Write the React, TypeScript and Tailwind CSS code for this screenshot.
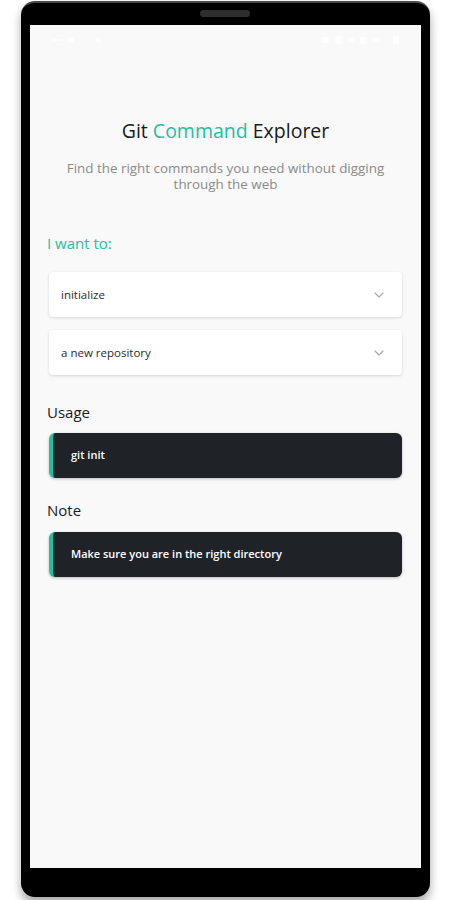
import { ChevronDown } from 'lucide-react'

const font = { fontFamily: '"Open Sans", "Noto Sans", sans-serif' }

function Select({ value }: { value: string }) {
  return (
    <div className="mx-[2px] h-[45px] flex items-center justify-between pl-3 pr-[15px] bg-white rounded-[4px] shadow-[0_1px_3px_rgba(0,0,0,0.14)]">
      <span className="text-[11.5px] text-[#2b2b2b]">{value}</span>
      <ChevronDown className="w-[16px] h-[16px] text-[#a8a8a8]" strokeWidth={1.75} />
    </div>
  )
}

function CodeBox({ text }: { text: string }) {
  return (
    <div className="mx-[2px] h-[45px] flex items-center bg-[#1f2328] rounded-[6px] border-l-[4px] border-[#1fbf9f] pl-[18px] shadow-[0_1px_3px_rgba(0,0,0,0.25)]">
      <span className="text-[11px] font-semibold text-white">{text}</span>
    </div>
  )
}

export default function App() {
  return (
    <div className="w-[450px] h-[900px] bg-white relative" style={font}>
      {/* Phone frame */}
      <div className="absolute left-[21px] top-[1px] w-[409px] h-[896px] bg-black rounded-[14px] border-t-2 border-[#4a4a4a] shadow-[0_6px_10px_rgba(0,0,0,0.35)] pt-[22px] px-[9px] pb-[29px] flex flex-col">
        <div className="absolute left-[179px] top-[7px] w-[50px] h-[7px] rounded-full bg-[#2e2e2e]" />

        {/* Screen */}
        <div className="flex-1 bg-[#f9f9f9] flex flex-col">
          {/* status bar (white icons, barely visible) */}
          <div className="h-[30px] flex items-center justify-between px-[22px] opacity-70">
            <div className="flex items-center gap-[6px]">
              <span className="w-[10px] h-[2px] bg-white" />
              <span className="w-[6px] h-[6px] rounded-full bg-white" />
              <span className="ml-4 w-[5px] h-[5px] rounded-full bg-white" />
            </div>
            <div className="flex items-center gap-[6px]">
              <span className="w-[8px] h-[6px] bg-white" />
              <span className="w-[8px] h-[8px] bg-white" />
              <span className="w-[5px] h-[4px] bg-white" />
              <span className="w-[7px] h-[7px] bg-white" />
              <span className="w-[6px] h-[4px] bg-white" />
              <span className="ml-2 w-[6px] h-[8px] bg-white" />
            </div>
          </div>

          <div className="px-[17px] pt-[63px]">
            <h1 className="text-center text-[19.5px] leading-[26px] text-[#1a1a1a]">
              Git <span className="text-[#1fbf9f]">Command</span> Explorer
            </h1>
            <p className="mt-4 mx-auto w-[340px] text-center text-[13.4px] leading-[16px] text-[#8a8a8a]">
              Find the right commands you need without digging through the web
            </p>

            <div className="mt-[41px] text-[15px] leading-[20px] text-[#1fbf9f]">I want to:</div>

            <div className="mt-[19px] flex flex-col gap-[13px]">
              <Select value="initialize" />
              <Select value="a new repository" />
            </div>

            <div className="mt-[27px] text-[15px] leading-[20px] text-[#1a1a1a]">Usage</div>
            <div className="mt-[11px]">
              <CodeBox text="git init" />
            </div>

            <div className="mt-[22px] text-[15px] leading-[20px] text-[#1a1a1a]">Note</div>
            <div className="mt-[12px]">
              <CodeBox text="Make sure you are in the right directory" />
            </div>
          </div>
        </div>
      </div>
    </div>
  )
}
